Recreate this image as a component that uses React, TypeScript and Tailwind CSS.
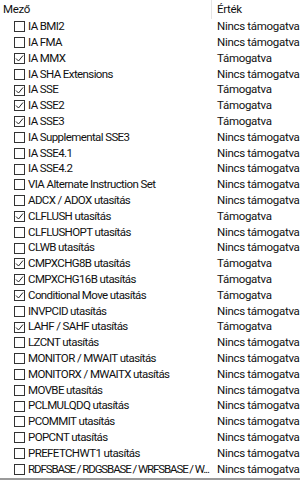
const rows: [string, boolean][] = [
  ['IA BMI2', false],
  ['IA FMA', false],
  ['IA MMX', true],
  ['IA SHA Extensions', false],
  ['IA SSE', true],
  ['IA SSE2', true],
  ['IA SSE3', true],
  ['IA Supplemental SSE3', false],
  ['IA SSE4.1', false],
  ['IA SSE4.2', false],
  ['VIA Alternate Instruction Set', false],
  ['ADCX / ADOX utasítás', false],
  ['CLFLUSH utasítás', true],
  ['CLFLUSHOPT utasítás', false],
  ['CLWB utasítás', false],
  ['CMPXCHG8B utasítás', true],
  ['CMPXCHG16B utasítás', true],
  ['Conditional Move utasítás', true],
  ['INVPCID utasítás', false],
  ['LAHF / SAHF utasítás', true],
  ['LZCNT utasítás', false],
  ['MONITOR / MWAIT utasítás', false],
  ['MONITORX / MWAITX utasítás', false],
  ['MOVBE utasítás', false],
  ['PCLMULQDQ utasítás', false],
  ['PCOMMIT utasítás', false],
  ['POPCNT utasítás', false],
  ['PREFETCHWT1 utasítás', false],
  ['RDFSBASE / RDGSBASE / WRFSBASE / W...', false],
]

function Check({ on }: { on: boolean }) {
  return (
    <span className="w-[11px] h-[11px] border border-[#333] bg-white flex items-center justify-center shrink-0">
      {on && (
        <svg width="9" height="9" viewBox="0 0 9 9">
          <path d="M1 4.5 L3.5 7 L8 1.5" fill="none" stroke="#222" strokeWidth="1" />
        </svg>
      )}
    </span>
  )
}

export default function App() {
  return (
    <div className="w-[300px] h-[480px] bg-white overflow-hidden text-[11.5px] tracking-[-0.3px] text-[#111] flex flex-col" style={{ fontFamily: 'Roboto, sans-serif' }}>
      {/* Header */}
      <div className="flex h-[19px] items-center shrink-0">
        <div className="w-[212px] shrink-0 pl-[3px] border-r border-[#e5e5e5] h-full flex items-center">Mező</div>
        <div className="pl-[5px]">Érték</div>
      </div>

      {/* Rows */}
      <div className="flex flex-col">
        {rows.map(([name, on], i) => (
          <div key={name} className="flex h-[15.8px] items-center">
            <div className="w-[212px] shrink-0 flex items-center gap-[3px] pl-[14px] overflow-hidden whitespace-nowrap">
              <Check on={on} />
              <span className={i === rows.length - 1 ? 'tracking-[-1.1px]' : 'tracking-[-0.6px]'}>{name}</span>
            </div>
            <div className="pl-[5px] whitespace-nowrap overflow-hidden">{on ? 'Támogatva' : 'Nincs támogatva'}</div>
          </div>
        ))}
      </div>

      <div className="mt-auto h-[2px] bg-[#9a9a9a]" />
    </div>
  )
}
